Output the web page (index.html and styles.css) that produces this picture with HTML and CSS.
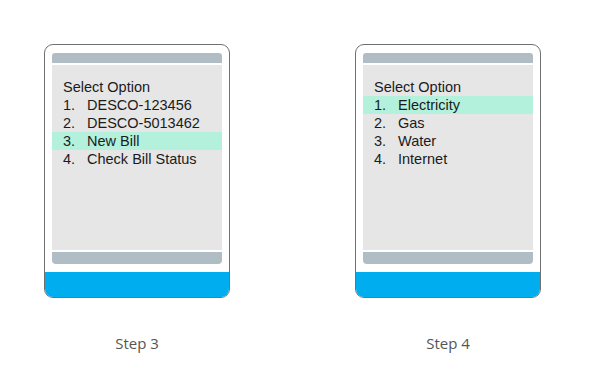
FILE: index.html
```html
<!DOCTYPE html>
<html>
  <head>
    <meta charset="utf-8" />
    <title>USSD steps</title>
    <meta name="viewport" content="width=device-width, initial-scale=1" />
    <link rel="stylesheet" href="styles.css">
  </head>
  <body>
    <div class="steps">
      <div class="step">
        <div class="phone">
          <div class="bar top-bar"></div>
          <div class="screen">
            <div class="row">Select Option</div>
            <div class="row"><span class="num">1.</span>DESCO-123456</div>
            <div class="row"><span class="num">2.</span>DESCO-5013462</div>
            <div class="row active"><span class="num">3.</span>New Bill</div>
            <div class="row"><span class="num">4.</span>Check Bill Status</div>
          </div>
          <div class="bar bottom-bar"></div>
          <div class="keypad"></div>
        </div>
        <div class="step-label">Step 3</div>
      </div>

      <div class="step">
        <div class="phone">
          <div class="bar top-bar"></div>
          <div class="screen">
            <div class="row">Select Option</div>
            <div class="row active"><span class="num">1.</span>Electricity</div>
            <div class="row"><span class="num">2.</span>Gas</div>
            <div class="row"><span class="num">3.</span>Water</div>
            <div class="row"><span class="num">4.</span>Internet</div>
          </div>
          <div class="bar bottom-bar"></div>
          <div class="keypad"></div>
        </div>
        <div class="step-label">Step 4</div>
      </div>
    </div>
  </body>
</html>
```

FILE: styles.css
```css
body {
  margin: 0;
  background: #fff;
}

.steps {
  display: flex;
  flex-direction: row;
  gap: 125px;
  padding: 44px 0 0 44px;
}

.step {
  display: flex;
  flex-direction: column;
  width: 186px;
}

.phone {
  box-sizing: border-box;
  height: 254px;
  border: 1px solid #717171;
  border-radius: 9px;
  overflow: hidden;
  display: flex;
  flex-direction: column;
  padding-top: 8px;
}

.bar {
  background-color: #b1bdc5;
  margin: 0 7px;
}

.top-bar {
  height: 10px;
  border-radius: 3px 3px 0 0;
}

.screen {
  background-color: #e6e6e6;
  margin: 2px 7px;
  height: 185px;
  box-sizing: border-box;
  padding-top: 13px;
  font-family: "Liberation Sans", Arial, sans-serif;
  font-size: 14.5px;
  color: #1b1b1b;
}

.row {
  height: 18px;
  line-height: 18px;
  padding-left: 11px;
  display: flex;
}

.row.active {
  background-color: #b4f1dd;
}

.num {
  width: 24px;
}

.bottom-bar {
  height: 12px;
  border-radius: 0 0 4px 4px;
}

.keypad {
  margin-top: auto;
  height: 25px;
  background-color: #00adee;
}

.step-label {
  margin-top: 35px;
  text-align: center;
  font-family: "Open Sans", sans-serif;
  font-size: 15px;
  line-height: 20px;
  color: #555;
}
```
